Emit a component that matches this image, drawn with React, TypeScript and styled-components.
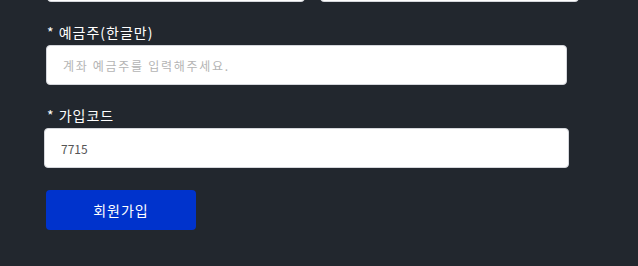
import React from 'react'
import styled, { createGlobalStyle } from 'styled-components'

const GlobalStyle = createGlobalStyle`
  html, body {
    margin: 0;
    padding: 0;
    background: #22272e;
    overflow: hidden;
  }
  body {
    font-family: 'Noto Sans CJK KR', 'Noto Sans', sans-serif;
  }
`

const Page = styled.div`
  width: 638px;
  height: 266px;
  background: #22272e;
  overflow: hidden;
`

const Form = styled.form`
  display: flex;
  flex-direction: column;
  margin-top: -38px;
  padding-left: 46px;
`

const PairRow = styled.div`
  display: flex;
  gap: 15px;
  margin-bottom: 22px;
`

const Field = styled.div`
  display: flex;
  flex-direction: column;
  gap: 4px;
  margin-bottom: 22px;
`

const Label = styled.label`
  color: #ffffff;
  font-size: 14px;
  line-height: 17px;
  letter-spacing: 1px;
  padding-left: 1px;
`

const TextInput = styled.input<{ width: number; shift?: number }>`
  box-sizing: border-box;
  width: ${({ width }) => width}px;
  height: 40px;
  margin-left: ${({ shift }) => shift ?? 0}px;
  padding: 0 16px;
  border: 1px solid #d4d6db;
  border-radius: 4px;
  background: #ffffff;
  color: #555555;
  font-family: 'Noto Sans CJK KR', 'Noto Sans', sans-serif;
  font-size: 12px;
  outline: none;
  &::placeholder {
    color: #b4b4b4;
    letter-spacing: 1.7px;
  }
`

const SubmitButton = styled.button`
  width: 150px;
  height: 40px;
  border: none;
  border-radius: 4px;
  background: #0033cc;
  color: #ffffff;
  font-family: 'Noto Sans CJK KR', 'Noto Sans', sans-serif;
  font-size: 14px;
  letter-spacing: 1px;
  cursor: pointer;
`

export default function App() {
  return (
    <Page>
      <GlobalStyle />
      <Form onSubmit={(e) => e.preventDefault()}>
        <PairRow>
          <TextInput width={258} shift={1} />
          <TextInput width={259} />
        </PairRow>
        <Field>
          <Label>* 예금주(한글만)</Label>
          <TextInput width={521} placeholder="계좌 예금주를 입력해주세요." />
        </Field>
        <Field>
          <Label>* 가입코드</Label>
          <TextInput width={525} shift={-2} defaultValue="7715" />
        </Field>
        <SubmitButton type="submit">회원가입</SubmitButton>
      </Form>
    </Page>
  )
}
